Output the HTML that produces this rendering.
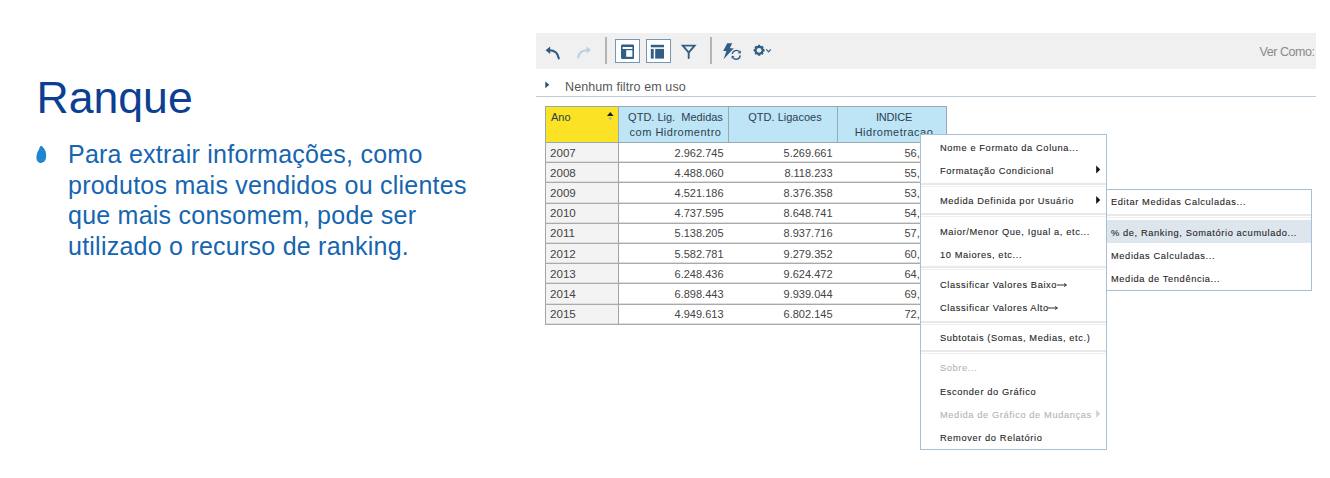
<!DOCTYPE html>
<html><head><meta charset="utf-8">
<style>
html,body{margin:0;padding:0;background:#fff;}
body{width:1330px;height:478px;position:relative;overflow:hidden;font-family:"Liberation Sans",sans-serif;}
.abs{position:absolute;}
#title{left:36.5px;top:68.3px;font-size:44.6px;line-height:60px;color:#0c3f92;white-space:pre;}
#bul{left:68px;top:139.4px;font-size:25px;line-height:30.5px;color:#1565b1;white-space:pre;letter-spacing:0.24px;}

#tb{left:536px;top:33px;width:780px;height:36px;background:#f0f0f0;}
.sep{position:absolute;top:4px;width:2px;height:27px;background:#b4b4b4;}
.box{position:absolute;top:6px;width:23px;height:22px;border:1px solid #7896b0;background:#fff;}
#vercomo{right:1.5px;top:12px;font-size:12.5px;letter-spacing:-0.45px;color:#8a8a8a;white-space:pre;}
#filt{left:565px;top:80px;font-size:12.5px;letter-spacing:0.1px;color:#575757;white-space:pre;line-height:14px;}
#fline{left:536px;top:96px;width:780px;height:1px;background:#bfcdd8;}
table{position:absolute;left:545px;top:106px;border-collapse:collapse;font-family:"Liberation Sans",sans-serif;font-size:11px;color:#444;}
td,th{border:1px solid #a4a4a4;padding:0 5px;height:19.2px;line-height:12px;font-weight:normal;}
th{height:32px;vertical-align:top;padding:3px 3px 0 7px;background:#bee5f6;color:#2c3e50;border-color:#98a9b3;line-height:15px;}
th.y{background:#fbe224;text-align:left;position:relative;padding-left:5px;padding-right:5px;}
td.y{background:#f3f3f3;text-align:left;font-size:11.6px;padding-left:4px;border-left:1px solid #a4a4a4;border-right:1px solid #a4a4a4;}
td{text-align:right;background:#fff;border-left:none;border-right:none;border-top-color:#aaaaaa;border-bottom-color:#aaaaaa;box-shadow:inset 0 -1px 0 #dedede;}
td.c4{text-align:left;padding-left:67px;padding-right:0;}
#menu{left:920px;top:134px;width:185px;height:314px;border:1px solid #a7c0d8;background:#fff;}
#sub{left:1106px;top:189px;width:204px;height:100px;border:1px solid #a7c0d8;background:#fff;}
.mi{position:absolute;font-size:9.3px;letter-spacing:0.6px;color:#262626;white-space:pre;line-height:10px;-webkit-text-stroke:0.1px currentColor;}
.mi.g{color:#b4b4b4;}
.hl{position:absolute;background:#dde5ed;}
.ms{position:absolute;height:4px;border-top:2px solid #e8e8e8;border-bottom:1px solid #efefef;box-sizing:border-box;}
.arr{position:absolute;width:0;height:0;border-top:4px solid transparent;border-bottom:4px solid transparent;border-left:4px solid #111;}
</style></head><body>
<div id="title" class="abs">Ranque</div>
<svg id="drop" class="abs" style="left:0;top:0" width="60" height="180" viewBox="0 0 60 180"><path d="M40.6 146 C41.8 145.6 44.2 147.8 45.4 151 C46.3 153.6 46.4 156.4 45.9 158.6 C45.1 161.6 43.1 162.9 41 162.9 C38.4 162.9 36.4 160.7 36.4 157.4 C36.4 154 37.9 151.4 39.1 149 C39.7 147.6 39.8 146.3 40.6 146 Z" fill="#1d87d0"/></svg>
<div id="bul" class="abs">Para extrair informações, como
produtos mais vendidos ou clientes
que mais consomem, pode ser
utilizado o recurso de ranking.</div>

<div id="tb" class="abs">
  <div class="sep" style="left:69px"></div>
  <div class="box" style="left:79px"></div>
  <div class="box" style="left:110px"></div>
  <div class="sep" style="left:174px"></div>
  <div id="vercomo" class="abs">Ver Como:</div>
</div>
<svg class="abs" style="left:0;top:0;z-index:2" width="1330" height="478" viewBox="0 0 1330 478">
<g fill="#2e5a80" stroke="none">
<path d="M545.6 50.2 L550.2 46.6 L550.2 53.9 Z"/>
</g>
<path d="M549 50.2 Q557.6 50.3 558.8 58.4" fill="none" stroke="#2e5a80" stroke-width="2.1" stroke-linecap="round"/>
<path d="M591 50 L586.6 46.6 L586.6 53.6 Z" fill="#b9d0e2"/>
<path d="M587.5 50 Q579.3 50.3 578.2 57.3" fill="none" stroke="#b9d0e2" stroke-width="2.2" stroke-linecap="round"/>
<path d="M621 45.8 Q621 44.6 622.2 44.6 L632.8 44.6 Q634 44.6 634 45.8 L634 57.7 Q634 58.9 632.8 58.9 L622.2 58.9 Q621 58.9 621 57.7 Z" fill="#2f5f87"/>
<rect x="622.6" y="47" width="9.8" height="2" fill="#fff"/>
<rect x="626.2" y="50.2" width="6.2" height="6.6" fill="#fff"/>
<rect x="650.8" y="44.8" width="13.2" height="2.5" fill="#2f5f87"/>
<rect x="650.8" y="48.9" width="2.9" height="9.7" fill="#2f5f87"/>
<rect x="655.2" y="48.9" width="8.8" height="9.7" fill="#2f5f87"/>
<path d="M682.8 45.6 L694.6 45.6 L688.7 52.6 Z M688.7 52.6 L688.7 58" fill="none" stroke="#2f5f87" stroke-width="1.9" stroke-linejoin="miter" stroke-linecap="round"/>
<path d="M727.2 43.2 L732.2 43.2 L729.8 48.3 L733.8 48.3 L723.6 59.2 L726.4 51 L723.2 51 Z" fill="#2f5f87"/>
<path d="M732.3 54 A4.1 4.1 0 0 1 739.6 52 M740.2 55.4 A4.1 4.1 0 0 1 732.8 57.6" fill="none" stroke="#2f5f87" stroke-width="1.4"/>
<path d="M740.8 50.2 L740.8 53.4 L737.8 53.2 Z M731.6 59 L731.6 55.8 L734.6 56 Z" fill="#2f5f87"/>
<g transform="translate(759.1 50.3)" fill="#2f5f87">
<circle r="4.6"/>
<rect x="-1.2" y="-5.5" width="2.4" height="11" rx="0.6"/>
<rect x="-1.2" y="-5.5" width="2.4" height="11" rx="0.6" transform="rotate(45)"/>
<rect x="-1.2" y="-5.5" width="2.4" height="11" rx="0.6" transform="rotate(90)"/>
<rect x="-1.2" y="-5.5" width="2.4" height="11" rx="0.6" transform="rotate(135)"/>
<circle r="2.4" fill="#f0f0f0"/>
</g>
<path d="M766.4 49.4 L768.6 51.8 L770.8 49.4" fill="none" stroke="#2f5f87" stroke-width="1.2"/>
<path d="M545.3 81.4 L549.3 84.8 L545.3 88.2 Z" fill="#2f4f6f"/>
<path d="M607 115.9 L610.3 112.1 L613.6 115.9 Z" fill="#1f1f1f"/>
<path d="M608.2 117.6 L612.2 117.6 L610.2 120.4 Z" fill="#b5ae90"/>
</svg>
<div id="filt" class="abs">Nenhum filtro em uso</div>
<div id="fline" class="abs"></div>

<table>
<tr><th class="y" style="width:62px">Ano</th><th style="width:99px">QTD. Lig.&nbsp; Medidas<br><span style="letter-spacing:0.5px">com Hidromentro</span></th><th style="width:98px">QTD. Ligacoes</th><th style="width:98px"><span style="letter-spacing:-0.2px">INDICE</span><br><span style="letter-spacing:0.5px">Hidrometracao</span></th></tr>
<tr><td class="y">2007</td><td>2.962.745</td><td>5.269.661</td><td class="c4">56,27%</td></tr>
<tr><td class="y">2008</td><td>4.488.060</td><td>8.118.233</td><td class="c4">55,27%</td></tr>
<tr><td class="y">2009</td><td>4.521.186</td><td>8.376.358</td><td class="c4">53,27%</td></tr>
<tr><td class="y">2010</td><td>4.737.595</td><td>8.648.741</td><td class="c4">54,27%</td></tr>
<tr><td class="y">2011</td><td>5.138.205</td><td>8.937.716</td><td class="c4">57,27%</td></tr>
<tr><td class="y">2012</td><td>5.582.781</td><td>9.279.352</td><td class="c4">60,27%</td></tr>
<tr><td class="y">2013</td><td>6.248.436</td><td>9.624.472</td><td class="c4">64,27%</td></tr>
<tr><td class="y">2014</td><td>6.898.443</td><td>9.939.044</td><td class="c4">69,27%</td></tr>
<tr><td class="y">2015</td><td>4.949.613</td><td>6.802.145</td><td class="c4">72,27%</td></tr>
</table>

<!--MENU-->
<div id="menu" class="abs"></div>
<div id="sub" class="abs"></div>
<div class="ms" style="left:921px;width:185px;top:183px"></div>
<div class="ms" style="left:921px;width:185px;top:213px"></div>
<div class="ms" style="left:921px;width:185px;top:266px"></div>
<div class="ms" style="left:921px;width:185px;top:321px"></div>
<div class="ms" style="left:921px;width:185px;top:350px"></div>
<div class="hl" style="left:1107px;top:220px;width:204px;height:23px"></div>
<div class="ms" style="left:1107px;width:204px;top:214px"></div>
<div class="mi" style="left:940px;top:142.7px">Nome e Formato da Coluna...</div>
<div class="mi" style="left:940px;top:165.9px">Formatação Condicional</div>
<div class="mi" style="left:940px;top:196.4px">Medida Definida por Usuário</div>
<div class="mi" style="left:940px;top:226.7px">Maior/Menor Que, Igual a, etc...</div>
<div class="mi" style="left:940px;top:250.2px">10 Maiores, etc...</div>
<div class="mi" style="left:940px;top:279.9px">Classificar Valores Baixo<svg width="10" height="6" viewBox="0 0 10 6" style="vertical-align:0px;margin-left:-0.5px"><path d="M0 3 L9 3 M7 1.5 L9.5 3 L7 4.5" fill="none" stroke="#333" stroke-width="1"/></svg></div>
<div class="mi" style="left:940px;top:302.6px">Classificar Valores Alto<svg width="10" height="6" viewBox="0 0 10 6" style="vertical-align:0px;margin-left:-0.5px"><path d="M0 3 L9 3 M7 1.5 L9.5 3 L7 4.5" fill="none" stroke="#333" stroke-width="1"/></svg></div>
<div class="mi" style="left:940px;top:332.7px">Subtotais (Somas, Medias, etc.)</div>
<div class="mi g" style="left:940px;top:363.3px">Sobre...</div>
<div class="mi" style="left:940px;top:387.1px">Esconder do Gráfico</div>
<div class="mi g" style="left:940px;top:410.1px">Medida de Gráfico de Mudanças</div>
<div class="mi" style="left:940px;top:433.2px">Remover do Relatório</div>
<div class="mi" style="left:1111px;top:197.4px">Editar Medidas Calculadas...</div>
<div class="mi" style="left:1111px;top:227.7px">% de, Ranking, Somatório acumulado...</div>
<div class="mi" style="left:1111px;top:250.8px">Medidas Calculadas...</div>
<div class="mi" style="left:1111px;top:274.2px">Medida de Tendência...</div>
<svg class="abs" style="left:0;top:0" width="1330" height="478" viewBox="0 0 1330 478">
<path d="M1096.2 165.5 L1100.2 169.5 L1096.2 173.5 Z" fill="#111"/>
<path d="M1096.2 196.0 L1100.2 200.0 L1096.2 204.0 Z" fill="#111"/>
<path d="M1096.2 409.7 L1100.2 413.7 L1096.2 417.7 Z" fill="#d2d2d2"/>
</svg>
<!--/MENU-->
</body></html>
